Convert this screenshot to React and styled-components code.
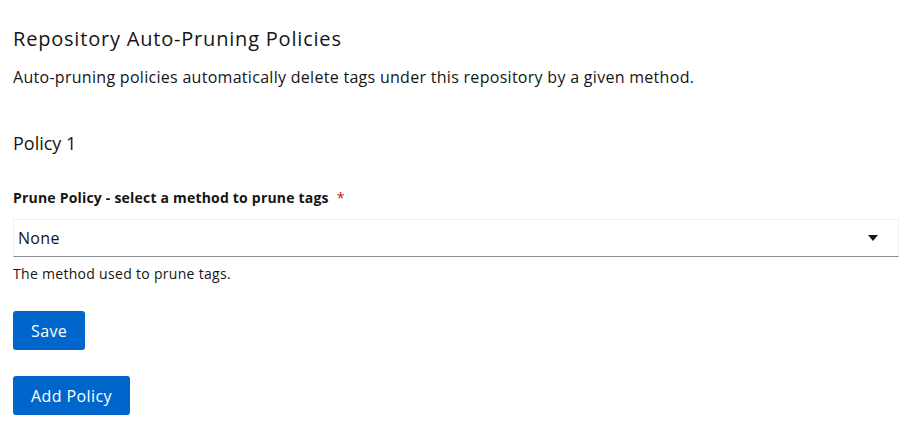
import styled, { createGlobalStyle } from "styled-components";

const GlobalStyle = createGlobalStyle`
  body {
    margin: 0;
    font-family: "Open Sans", "Liberation Sans", sans-serif;
    color: #151515;
    background: #fff;
  }
`;

function App() {
  return (
    <>
      <GlobalStyle />
      <Page>
        <Title>Repository Auto-Pruning Policies</Title>
        <Description>
          Auto-pruning policies automatically delete tags under this repository by a given method.
        </Description>
        <PolicyTitle>Policy 1</PolicyTitle>
        <Form>
          <FieldGroup>
            <Label>
              Prune Policy - select a method to prune tags
              <Required>*</Required>
            </Label>
            <SelectBox>
              <span>None</span>
              <Caret viewBox="0 0 10 6" aria-hidden="true">
                <path d="M0 0h10L5 6z" />
              </Caret>
            </SelectBox>
            <Helper>The method used to prune tags.</Helper>
          </FieldGroup>
          <Button>Save</Button>
        </Form>
        <Button>Add Policy</Button>
      </Page>
    </>
  );
}

export default App;

const Page = styled.div`
  padding: 26px 14px 13px 13px;
  display: flex;
  flex-direction: column;
  align-items: flex-start;
`;

const Title = styled.h2`
  margin: 0;
  font-size: 20px;
  font-weight: 400;
  line-height: 26px;
  letter-spacing: 0.8px;
`;

const Description = styled.p`
  margin: 13px 0 0;
  font-size: 16px;
  line-height: 24px;
  letter-spacing: 0.29px;
`;

const PolicyTitle = styled.h3`
  margin: 42px 0 0;
  font-size: 18px;
  font-weight: 400;
  line-height: 24px;
`;

const Form = styled.div`
  margin-top: 32px;
  width: 100%;
  display: flex;
  flex-direction: column;
  align-items: flex-start;
  gap: 27px;
`;

const FieldGroup = styled.div`
  width: 100%;
  display: flex;
  flex-direction: column;
`;

const Label = styled.label`
  font-size: 14px;
  font-weight: 700;
  line-height: 21px;
  margin-bottom: 11px;
  letter-spacing: 0.2px;
`;

const Required = styled.span`
  color: #c9190b;
  margin-left: 8px;
  font-weight: 400;
`;

const SelectBox = styled.div`
  box-sizing: border-box;
  width: 100%;
  height: 38px;
  display: flex;
  align-items: center;
  justify-content: space-between;
  padding: 0 20px 0 4px;
  border: 1px solid #f0f0f0;
  border-bottom-color: #8a8d90;
  font-size: 16px;
  letter-spacing: 0.3px;
`;

const Caret = styled.svg`
  width: 10px;
  height: 6px;
  fill: #151515;
`;

const Helper = styled.div`
  margin-top: 6px;
  font-size: 14px;
  line-height: 21px;
  letter-spacing: 0.3px;
`;

const Button = styled.button`
  background: #0066cc;
  color: #fff;
  border: none;
  border-radius: 3px;
  padding: 0 18px;
  height: 39px;
  font-family: inherit;
  font-size: 16px;
  letter-spacing: 0.4px;
  cursor: pointer;
  ${Form} + & {
    margin-top: 26px;
  }
`;
